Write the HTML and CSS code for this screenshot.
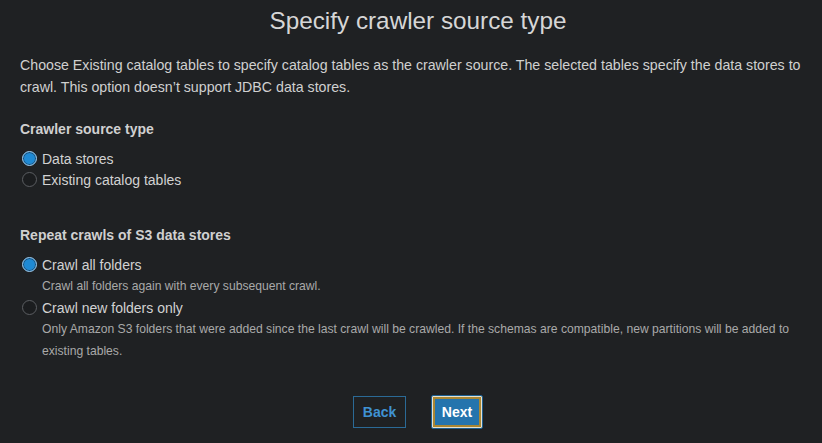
FILE: index.html
```html
<!DOCTYPE html>
<html>
<head>
<meta charset="utf-8">
<link rel="stylesheet" href="styles.css">
</head>
<body>
<div class="page">
  <h1 class="title">Specify crawler source type</h1>
  <p class="intro">Choose Existing catalog tables to specify catalog tables as the crawler source. The selected tables specify the data stores to crawl. This option doesn’t support JDBC data stores.</p>

  <section class="group first">
    <h2 class="group-title">Crawler source type</h2>
    <div class="option"><span class="radio checked"></span><span class="label">Data stores</span></div>
    <div class="option"><span class="radio"></span><span class="label">Existing catalog tables</span></div>
  </section>

  <section class="group second">
    <h2 class="group-title">Repeat crawls of S3 data stores</h2>
    <div class="option"><span class="radio checked"></span><span class="label">Crawl all folders</span></div>
    <p class="desc">Crawl all folders again with every subsequent crawl.</p>
    <div class="option"><span class="radio"></span><span class="label">Crawl new folders only</span></div>
    <p class="desc">Only Amazon S3 folders that were added since the last crawl will be crawled. If the schemas are compatible, new partitions will be added to existing tables.</p>
  </section>

  <div class="actions">
    <button class="btn back">Back</button>
    <button class="btn next">Next</button>
  </div>
</div>
</body>
</html>
```

FILE: styles.css
```css
html, body {
  margin: 0;
  padding: 0;
  background: #1f2123;
  height: 100%;
}
body {
  font-family: "Liberation Sans", Arial, sans-serif;
  color: #d2d2d2;
}
.page {
  padding: 0 20px 0 20px;
}
.title {
  margin: 0;
  padding-left: 14px;
  font-weight: normal;
  font-size: 24.3px;
  line-height: 41px;
  text-align: center;
  color: #d6d6d6;
}
.intro {
  margin: 13px 0 0 0;
  font-size: 14.2px;
  line-height: 22px;
  color: #d0d0d0;
}
.group-title {
  margin: 0 0 9px 0;
  font-size: 14px;
  font-weight: bold;
  line-height: 20px;
  color: #d0d0d0;
}
.group.first {
  margin-top: 21px;
}
.group.second {
  margin-top: 35px;
}
.option {
  display: flex;
  align-items: center;
  height: 21px;
  padding-left: 2px;
}
.radio {
  box-sizing: border-box;
  width: 15px;
  height: 15px;
  border-radius: 50%;
  border: 1px solid #5b5e62;
  background: #1b1d1f;
  margin-right: 5px;
}
.radio.checked {
  background: #1f8ad4;
  border: 1px solid #9ec7e6;
  box-shadow: inset 0 0 0 1px #1b4f78;
}
.label {
  font-size: 14px;
  color: #d2d2d2;
}
.desc {
  margin: 0;
  padding-left: 22px;
  font-size: 12.15px;
  line-height: 22px;
  color: #a9a9a9;
}
.actions {
  display: flex;
  justify-content: center;
  gap: 25px;
  margin-top: 34px;
  padding-left: 14px;
}
.btn {
  font-family: "Liberation Sans", Arial, sans-serif;
  font-size: 14px;
  font-weight: bold;
  height: 32px;
  box-sizing: border-box;
  cursor: pointer;
}
.back {
  width: 53px;
  background: transparent;
  border: 1px solid #2b6a96;
  color: #3f92d2;
}
.next {
  width: 52px;
  height: 34px;
  margin-top: -1px;
  background: #2474ad;
  border: 1px solid #1c5f90;
  color: #ffffff;
  border-radius: 2px;
  box-shadow: inset 0 0 0 1px #e6e1d2, inset 0 0 0 3px #a98632;
}
```
